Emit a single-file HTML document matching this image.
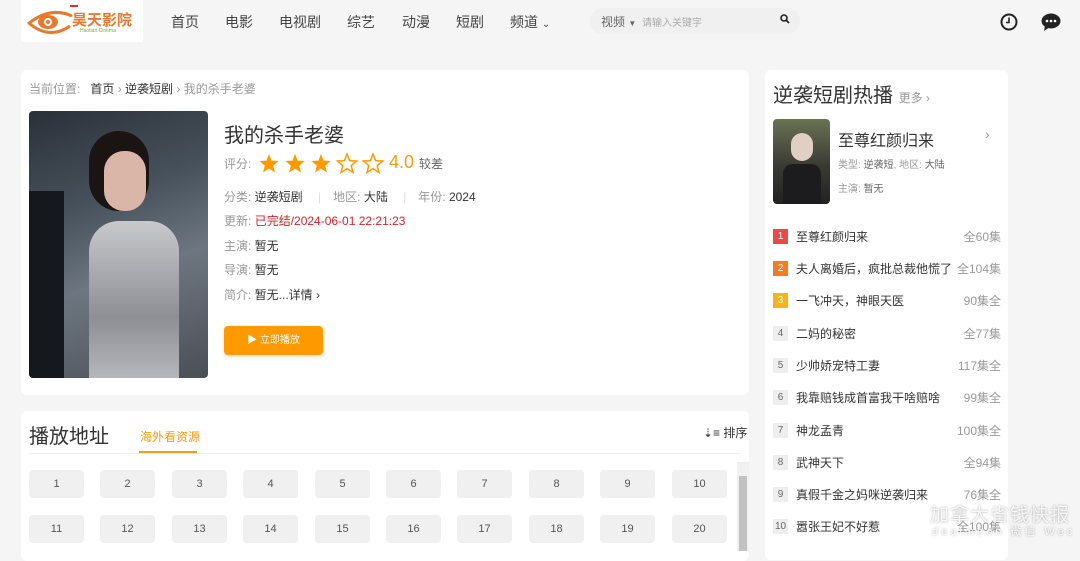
<!DOCTYPE html>
<html><head><meta charset="utf-8"><style>
*{margin:0;padding:0;box-sizing:border-box}
body{width:1080px;height:551px;overflow:hidden;background:#f5f5f5;font-family:"Liberation Sans","Noto Sans CJK SC",sans-serif;color:#333;position:relative}
.a{position:absolute;white-space:nowrap}
.card{position:absolute;background:#fff;border-radius:6px}
.nav{font-size:14px;color:#444;top:12px}
.lbl{color:#999}
.row{font-size:12px;left:224px}
.ep{position:absolute;width:55px;height:28px;background:#f0f0f0;border-radius:4px;font-size:11px;color:#555;text-align:center;line-height:28px}
.li{position:absolute;left:773px;width:230px;font-size:12px;height:16px;line-height:16px}
.li .n{position:absolute;left:0;top:0;width:15px;height:15px;background:#eee;color:#666;text-align:center;font-size:10px;line-height:15px}
.li .t{position:absolute;left:23px;color:#333}
.li .c{position:absolute;right:2px;color:#999}
</style></head><body>
<!-- header -->
<div class="a" style="left:21px;top:0;width:122px;height:42px;background:#fff"></div>
<svg class="a" style="left:26px;top:4px" width="50" height="36" viewBox="0 0 50 36"><path d="M2 20 Q24 2 46 12" stroke="#e8792c" stroke-width="3" fill="none"/><path d="M4 20 Q24 36 44 22" stroke="#e8792c" stroke-width="3" fill="none"/><ellipse cx="22" cy="18" rx="10" ry="7" fill="#e8792c"/><circle cx="22" cy="18" r="4" fill="#fff"/><circle cx="22" cy="18" r="2" fill="#e8792c"/></svg>
<div class="a" style="left:70px;top:5px;width:8px;height:2px;background:#c33"></div>
<div class="a" style="left:72px;top:9px;font-size:15px;font-weight:bold;color:#e8792c">昊天影院</div>
<div class="a" style="left:80px;top:28px;font-size:5px;color:#7a4">Haotian Cinema</div>
<div class="a nav" style="left:171px">首页</div>
<div class="a nav" style="left:225px">电影</div>
<div class="a nav" style="left:279px">电视剧</div>
<div class="a nav" style="left:347px">综艺</div>
<div class="a nav" style="left:402px">动漫</div>
<div class="a nav" style="left:456px">短剧</div>
<div class="a nav" style="left:510px">频道 <span style="font-size:10px">⌄</span></div>
<div class="a" style="left:590px;top:8px;width:210px;height:26px;border-radius:13px;background:#f0f0f0"></div>
<div class="a" style="left:601px;top:13px;font-size:12px;color:#666">视频 <span style="font-size:8px">▼</span></div>
<div class="a" style="left:642px;top:14px;font-size:10px;color:#aaa">请输入关键字</div>
<svg class="a" style="left:780px;top:14px" width="10" height="10" viewBox="0 0 10 10"><circle cx="4" cy="4" r="3" stroke="#222" stroke-width="1.6" fill="none"/><path d="M6 6L9 9" stroke="#222" stroke-width="1.8"/></svg>
<svg class="a" style="left:1000px;top:13px" width="18" height="18" viewBox="0 0 18 18"><circle cx="9" cy="9" r="7.5" stroke="#222" stroke-width="2" fill="none"/><path d="M9 4.5V9.5H6" stroke="#222" stroke-width="1.6" fill="none"/></svg>
<svg class="a" style="left:1041px;top:13px" width="20" height="19" viewBox="0 0 20 19"><ellipse cx="10" cy="8" rx="9.5" ry="7.5" fill="#222"/><path d="M4 13L3 18L9 14Z" fill="#222"/><circle cx="6" cy="8" r="1.3" fill="#fff"/><circle cx="10" cy="8" r="1.3" fill="#fff"/><circle cx="14" cy="8" r="1.3" fill="#fff"/></svg>

<!-- main card -->
<div class="card" style="left:21px;top:70px;width:728px;height:325px"></div>
<div class="a" style="left:29px;top:80px;font-size:12px;color:#999">当前位置: &nbsp; <span style="color:#333">首页</span> › <span style="color:#333">逆袭短剧</span> › 我的杀手老婆</div>
<div class="a" style="left:29px;top:111px;width:179px;height:267px;border-radius:4px;overflow:hidden;background:linear-gradient(160deg,#2a3038 0%,#48525c 35%,#6d7680 60%,#4a4f56 100%)">
<div class="a" style="left:60px;top:20px;width:60px;height:80px;border-radius:30px;background:#1a1412"></div>
<div class="a" style="left:75px;top:40px;width:42px;height:60px;border-radius:20px;background:#d9b6a8"></div>
<div class="a" style="left:60px;top:110px;width:90px;height:160px;border-radius:30px 30px 0 0;background:linear-gradient(180deg,#c9c9cc,#8d8f95 60%,#b7b8bc)"></div>
<div class="a" style="left:0;top:80px;width:35px;height:190px;background:#15181c"></div>
</div>
<div class="a" style="left:224px;top:119px;font-size:20px;color:#333">我的杀手老婆</div>
<div class="a row" style="top:155px"><span class="lbl">评分:</span></div>
<svg class="a" style="left:259px;top:153px" width="126" height="22" viewBox="0 0 126 22">
<defs><path id="s" d="M10 1L12.6 7.6L19.6 8L14.2 12.6L16 19.5L10 15.6L4 19.5L5.8 12.6L0.4 8L7.4 7.6Z"/></defs>
<use href="#s" x="0" fill="#f90"/><use href="#s" x="26" fill="#f90"/><use href="#s" x="52" fill="#f90"/>
<use href="#s" x="78" fill="none" stroke="#f90" stroke-width="1.5"/><use href="#s" x="104" fill="none" stroke="#f90" stroke-width="1.5"/>
</svg>
<div class="a" style="left:389px;top:152px;font-size:18px;color:#f39c12">4.0 <span style="font-size:12px;color:#666">较差</span></div>
<div class="a row" style="top:188px"><span class="lbl">分类:</span> 逆袭短剧 <span style="color:#ddd;margin:0 12px">|</span><span class="lbl">地区:</span> 大陆 <span style="color:#ddd;margin:0 12px">|</span><span class="lbl">年份:</span> 2024</div>
<div class="a row" style="top:212px"><span class="lbl">更新:</span> <span style="color:#d0242b">已完结/2024-06-01 22:21:23</span></div>
<div class="a row" style="top:237px"><span class="lbl">主演:</span> 暂无</div>
<div class="a row" style="top:261px"><span class="lbl">导演:</span> 暂无</div>
<div class="a row" style="top:286px"><span class="lbl">简介:</span> 暂无...详情 ›</div>
<div class="a" style="left:224px;top:326px;width:99px;height:29px;background:#f90;border-radius:4px;color:#fff;font-size:10px;text-align:center;line-height:29px;box-shadow:0 2px 4px rgba(255,153,0,.3)">▶ 立即播放</div>

<!-- play card -->
<div class="card" style="left:21px;top:411px;width:728px;height:150px"></div>
<div class="a" style="left:29px;top:420px;font-size:20px;color:#333">播放地址</div>
<div class="a" style="left:140px;top:428px;font-size:12px;color:#f39c12">海外看资源</div>
<div class="a" style="left:139px;top:451px;width:58px;height:2px;background:#f39c12"></div>
<div class="a" style="left:29px;top:453px;width:712px;height:1px;background:#f0f0f0"></div>
<div class="a" style="left:703px;top:424px;font-size:12px;color:#333">⇣≡ 排序</div>
<div class="a" style="left:737px;top:462px;width:12px;height:89px;background:#f1f1f1"></div>
<div class="a" style="left:739px;top:476px;width:8px;height:75px;background:#c1c1c1"></div>
<div class="ep" style="left:29px;top:470px">1</div><div class="ep" style="left:100px;top:470px">2</div><div class="ep" style="left:172px;top:470px">3</div><div class="ep" style="left:243px;top:470px">4</div><div class="ep" style="left:315px;top:470px">5</div><div class="ep" style="left:386px;top:470px">6</div><div class="ep" style="left:457px;top:470px">7</div><div class="ep" style="left:529px;top:470px">8</div><div class="ep" style="left:600px;top:470px">9</div><div class="ep" style="left:672px;top:470px">10</div>
<div class="ep" style="left:29px;top:515px">11</div><div class="ep" style="left:100px;top:515px">12</div><div class="ep" style="left:172px;top:515px">13</div><div class="ep" style="left:243px;top:515px">14</div><div class="ep" style="left:315px;top:515px">15</div><div class="ep" style="left:386px;top:515px">16</div><div class="ep" style="left:457px;top:515px">17</div><div class="ep" style="left:529px;top:515px">18</div><div class="ep" style="left:600px;top:515px">19</div><div class="ep" style="left:672px;top:515px">20</div>

<!-- right card -->
<div class="card" style="left:765px;top:70px;width:243px;height:490px"></div>
<div class="a" style="left:773px;top:79px;font-size:20px;color:#333">逆袭短剧热播 <span style="font-size:12px;color:#999">更多 ›</span></div>
<div class="a" style="left:773px;top:119px;width:57px;height:85px;border-radius:4px;background:linear-gradient(180deg,#6b7355,#3a3a34 55%,#222 100%);overflow:hidden">
<div class="a" style="left:18px;top:14px;width:22px;height:28px;border-radius:11px;background:#e2cfc4"></div>
<div class="a" style="left:10px;top:45px;width:38px;height:40px;border-radius:10px 10px 0 0;background:#1c1c1e"></div>
</div>
<div class="a" style="left:838px;top:127px;font-size:16px;color:#333">至尊红颜归来</div>
<div class="a" style="left:985px;top:126px;font-size:14px;color:#999">›</div>
<div class="a" style="left:838px;top:156px;font-size:10px;color:#999">类型: <span style="color:#666">逆袭短</span>, 地区: <span style="color:#666">大陆</span></div>
<div class="a" style="left:838px;top:180px;font-size:10px;color:#999">主演: <span style="color:#666">暂无</span></div>
<div class="li" style="top:229px"><span class="n" style="background:#e84a4a;color:#fff">1</span><span class="t">至尊红颜归来</span><span class="c">全60集</span></div>
<div class="li" style="top:261px"><span class="n" style="background:#f57c1f;color:#fff">2</span><span class="t">夫人离婚后，疯批总裁他慌了</span><span class="c">全104集</span></div>
<div class="li" style="top:293px"><span class="n" style="background:#f8b319;color:#fff">3</span><span class="t">一飞冲天，神眼天医</span><span class="c">90集全</span></div>
<div class="li" style="top:326px"><span class="n">4</span><span class="t">二妈的秘密</span><span class="c">全77集</span></div>
<div class="li" style="top:358px"><span class="n">5</span><span class="t">少帅娇宠特工妻</span><span class="c">117集全</span></div>
<div class="li" style="top:390px"><span class="n">6</span><span class="t">我靠赔钱成首富我干啥赔啥</span><span class="c">99集全</span></div>
<div class="li" style="top:423px"><span class="n">7</span><span class="t">神龙孟青</span><span class="c">100集全</span></div>
<div class="li" style="top:455px"><span class="n">8</span><span class="t">武神天下</span><span class="c">全94集</span></div>
<div class="li" style="top:487px"><span class="n">9</span><span class="t">真假千金之妈咪逆袭归来</span><span class="c">76集全</span></div>
<div class="li" style="top:519px"><span class="n">10</span><span class="t">嚣张王妃不好惹</span><span class="c">全100集</span></div>
<div class="a" style="left:930px;top:500px;font-size:19px;color:rgba(255,255,255,.85);text-shadow:0 0 2px rgba(0,0,0,.35);letter-spacing:1px">加拿大省钱快报</div>
<div class="a" style="left:932px;top:523px;font-size:11px;color:rgba(255,255,255,.85);text-shadow:0 0 2px rgba(0,0,0,.35);letter-spacing:3px">dealmoon 微信 Wec</div>
</body></html>
